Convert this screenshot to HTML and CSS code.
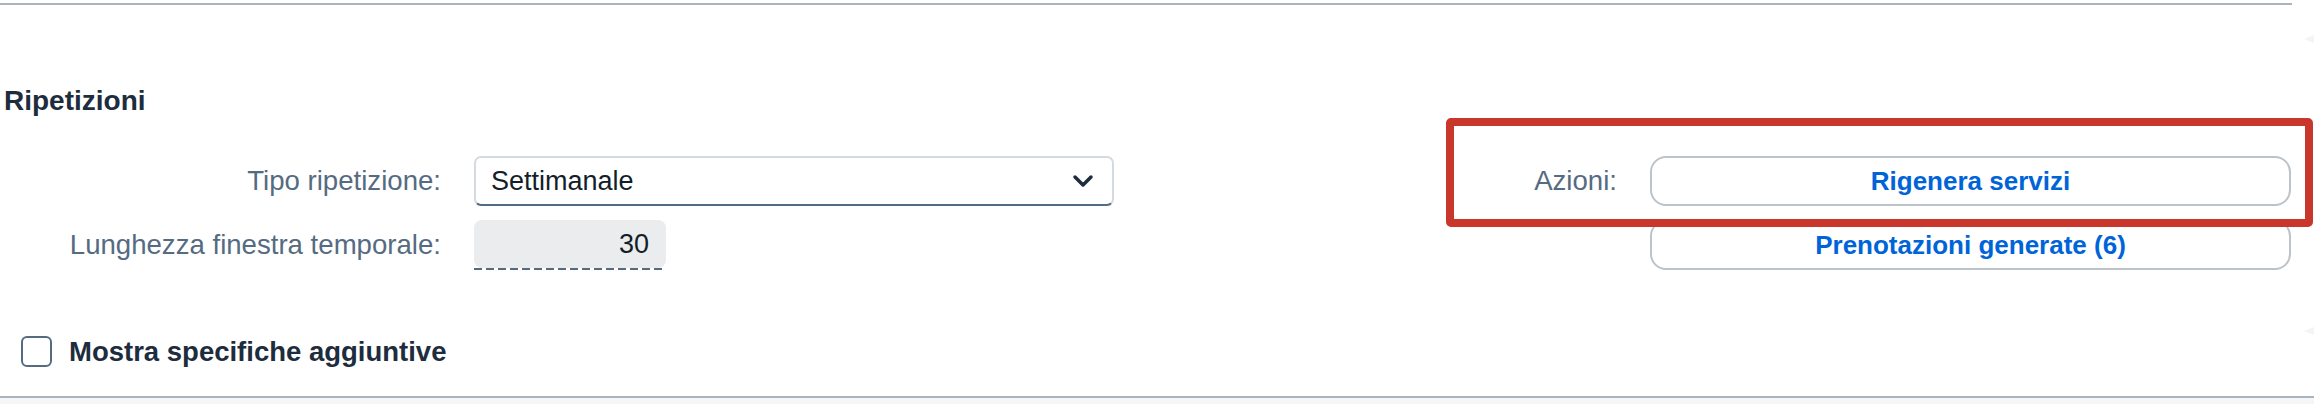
FILE: index.html
```html
<!DOCTYPE html>
<html lang="it">
<head>
  <meta charset="UTF-8" />
  <link rel="stylesheet" href="styles.css">
</head>
<body>
  <div class="panel">
    <section class="group">
      <h2 class="group-title">Ripetizioni</h2>

      <div class="form-grid">
        <label class="field-label" for="tipo">Tipo ripetizione:</label>
        <div class="select" id="tipo">
          <span class="select-value">Settimanale</span>
          <svg class="chevron" viewBox="0 0 22 14" width="22" height="14">
            <path d="M3 3 L11 11 L19 3" />
          </svg>
        </div>

        <span class="field-label">Azioni:</span>
        <button class="btn">Rigenera servizi</button>

        <label class="field-label" for="finestra">Lunghezza finestra temporale:</label>
        <div class="number-wrap">
          <div class="number-field" id="finestra">30</div>
        </div>

        <span></span>
        <button class="btn">Prenotazioni generate (6)</button>

        <!-- marker round the actions row -->
        <div class="highlight"></div>
      </div>

      <label class="check-row">
        <span class="checkbox"></span>
        <span class="check-text">Mostra specifiche aggiuntive</span>
      </label>
    </section>

    <div class="footer-strip"></div>

    <!-- side panel grips peeking in at the right edge -->
    <span class="grip grip-top"></span>
    <span class="grip grip-bottom"></span>
  </div>
</body>
</html>
```

FILE: styles.css
```css
body {
  font-family: 'Liberation Sans', Arial, sans-serif;
  margin: 0;
  padding-top: 3px;
  background-color: #fff;
  color: #131e29;
  overflow: hidden;
}

.panel {
  position: relative;
}

.group {
  border-top: 2px solid #a9b4be;
  margin-right: 22px;
}

.group-title {
  margin: 79px 0 0;
  padding-left: 4px;
  font-size: 28px;
  line-height: 34px;
  font-weight: 700;
  color: #1d2d3e;
}

.form-grid {
  position: relative;
  display: grid;
  grid-template-columns: 441px 640px 470px 641px;
  grid-auto-rows: 50px;
  column-gap: 33px;
  row-gap: 14px;
  margin-top: 38px;
}

.field-label {
  align-self: center;
  text-align: right;
  font-size: 27.6px;
  color: #556b82;
  white-space: nowrap;
}

.select {
  display: flex;
  align-items: center;
  justify-content: space-between;
  box-sizing: border-box;
  height: 50px;
  padding: 0 18px 0 15px;
  border: 2px solid #d5dadf;
  border-bottom-color: #556b82;
  border-radius: 7px;
  font-size: 27px;
}

.chevron {
  fill: none;
  stroke: #1d2d3e;
  stroke-width: 3.5;
  stroke-linecap: round;
  stroke-linejoin: round;
}

.number-wrap {
  width: 192px;
  padding-bottom: 2px;
  background: repeating-linear-gradient(90deg, #556b82 0 8px, transparent 8px 12px) left bottom / 100% 2px no-repeat;
}

.number-field {
  box-sizing: border-box;
  height: 48px;
  padding: 0 17px;
  background: #eaecee;
  border-radius: 8px;
  font-size: 27px;
  line-height: 48px;
  text-align: right;
}

.btn {
  box-sizing: border-box;
  height: 50px;
  margin: 0;
  padding: 0 16px;
  background: #fff;
  border: 2px solid #bcc3ca;
  border-radius: 16px;
  font-family: inherit;
  font-size: 26px;
  font-weight: 700;
  color: #0064d9;
  cursor: pointer;
}

.highlight {
  position: absolute;
  top: -38px;
  left: 1446px;
  width: 867px;
  height: 109px;
  box-sizing: border-box;
  border: 8px solid #c9372c;
  border-radius: 5px;
  pointer-events: none;
}

.check-row {
  display: flex;
  align-items: center;
  gap: 17px;
  height: 31px;
  margin-top: 66px;
  padding-left: 21px;
  margin-bottom: 29px;
}

.checkbox {
  box-sizing: border-box;
  width: 31px;
  height: 31px;
  border: 2px solid #556b82;
  border-radius: 6px;
  background: #fff;
}

.check-text {
  font-size: 27.5px;
  line-height: 31px;
  font-weight: 700;
  color: #1d2d3e;
}

.footer-strip {
  height: 20px;
  border-top: 2px solid #a9b4be;
  background: #f5f6f7;
}

.grip {
  position: absolute;
  right: 0;
  width: 0;
  height: 0;
  border-top: 4px solid transparent;
  border-bottom: 4px solid transparent;
  border-right: 10px solid #f3f4f6;
}

.grip-top {
  top: 32px;
}

.grip-bottom {
  top: 324px;
}
```
